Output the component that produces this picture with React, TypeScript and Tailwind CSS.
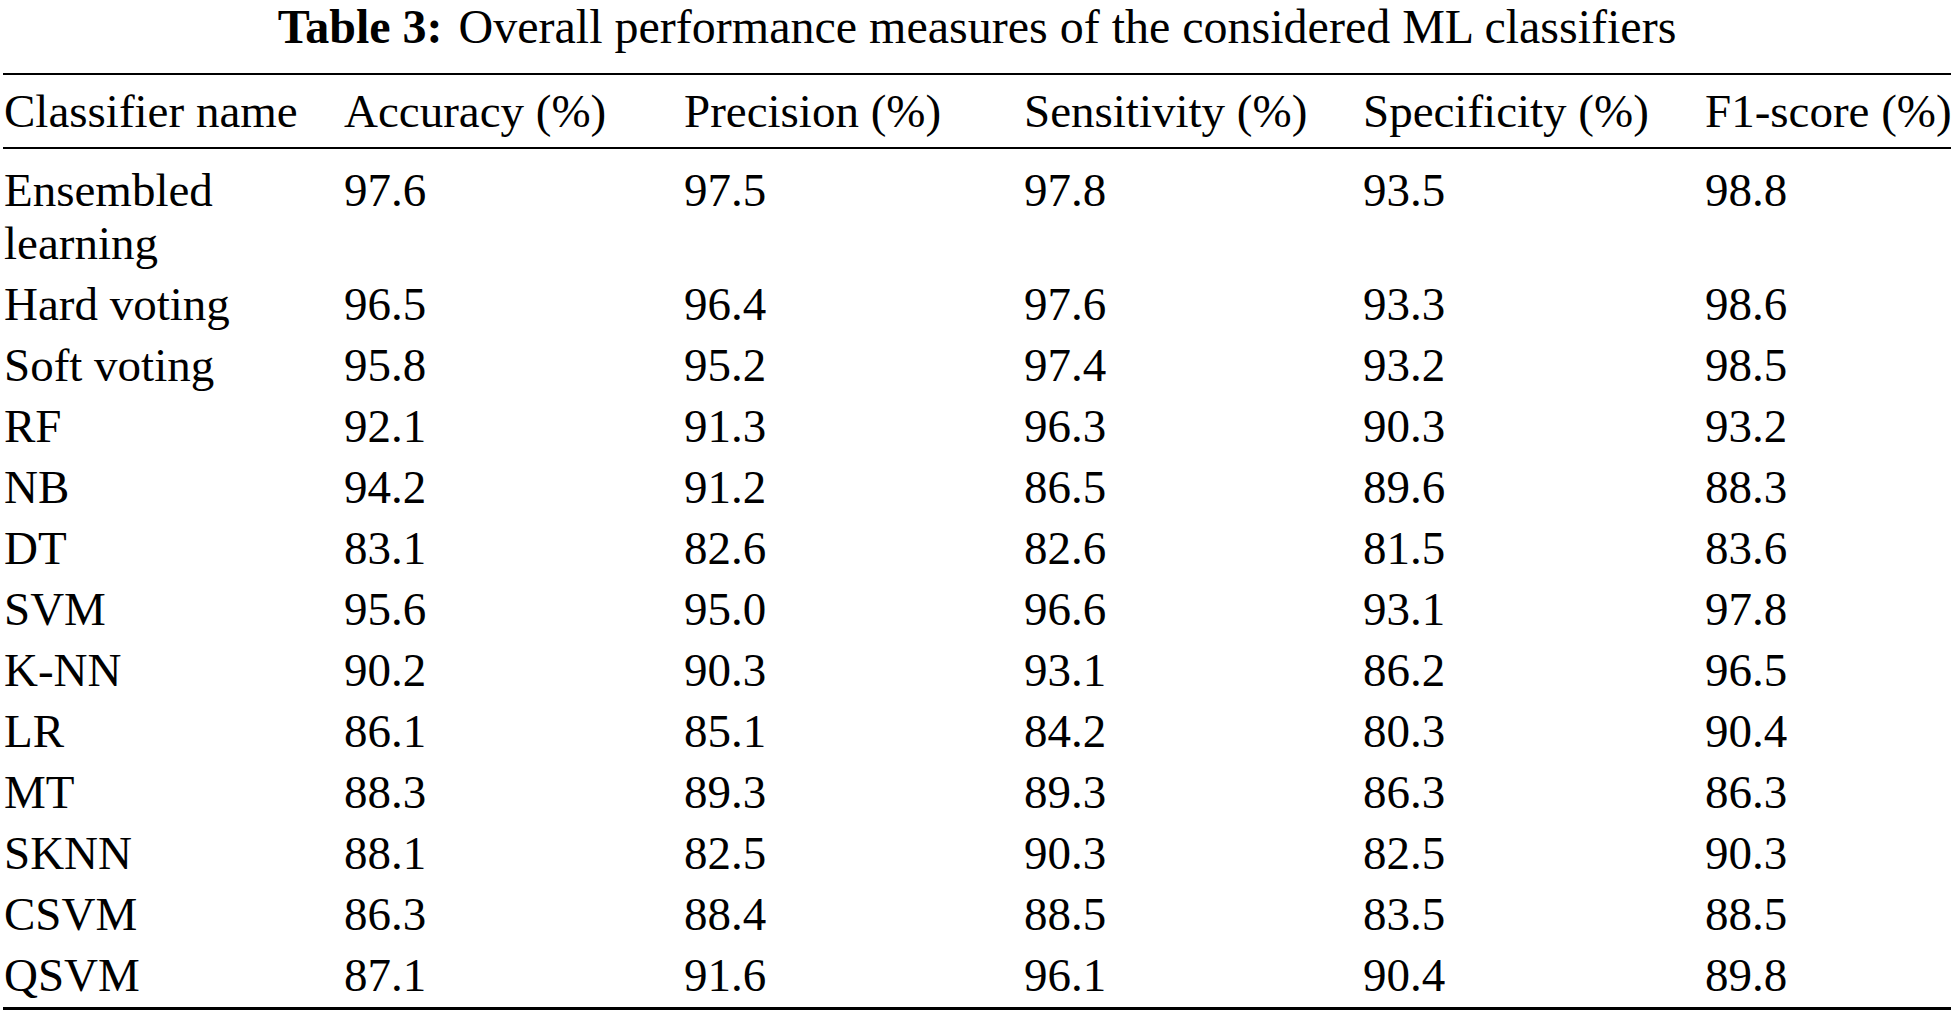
import React from "react";

type Row = {
  name: string;
  values: string[];
};

const headers = [
  "Classifier name",
  "Accuracy (%)",
  "Precision (%)",
  "Sensitivity (%)",
  "Specificity (%)",
  "F1-score (%)",
];

const rows: Row[] = [
  { name: "Ensembled learning", values: ["97.6", "97.5", "97.8", "93.5", "98.8"] },
  { name: "Hard voting", values: ["96.5", "96.4", "97.6", "93.3", "98.6"] },
  { name: "Soft voting", values: ["95.8", "95.2", "97.4", "93.2", "98.5"] },
  { name: "RF", values: ["92.1", "91.3", "96.3", "90.3", "93.2"] },
  { name: "NB", values: ["94.2", "91.2", "86.5", "89.6", "88.3"] },
  { name: "DT", values: ["83.1", "82.6", "82.6", "81.5", "83.6"] },
  { name: "SVM", values: ["95.6", "95.0", "96.6", "93.1", "97.8"] },
  { name: "K-NN", values: ["90.2", "90.3", "93.1", "86.2", "96.5"] },
  { name: "LR", values: ["86.1", "85.1", "84.2", "80.3", "90.4"] },
  { name: "MT", values: ["88.3", "89.3", "89.3", "86.3", "86.3"] },
  { name: "SKNN", values: ["88.1", "82.5", "90.3", "82.5", "90.3"] },
  { name: "CSVM", values: ["86.3", "88.4", "88.5", "83.5", "88.5"] },
  { name: "QSVM", values: ["87.1", "91.6", "96.1", "90.4", "89.8"] },
];

// fixed column tracks so every row lines up like the typeset table
const cols = "grid grid-cols-[340px_340px_340px_339px_342px_1fr]";

export default function App() {
  return (
    <div className="min-h-screen w-[1954px] bg-white text-black font-['Liberation_Serif','Times_New_Roman',serif] text-[47px]">
      {/* Caption */}
      <div className="text-center text-[48px] leading-[54px] whitespace-nowrap">
        <span className="font-bold">Table 3:</span>
        <span className="ml-[16px]">Overall performance measures of the considered ML classifiers</span>
      </div>

      {/* Table */}
      <div className="mt-[19px] mx-[3px]">
        <div className="border-t-2 border-b-2 border-black">
          <div className={`${cols} pl-[1px] pt-[10px] pb-[9px] leading-[53px]`}>
            {headers.map((h) => (
              <div key={h} className="whitespace-nowrap">
                {h}
              </div>
            ))}
          </div>
        </div>

        <div className="pt-[11px] pb-px border-b-[3px] border-black">
          {rows.map((r) => (
            <div key={r.name} className={`${cols} pl-[1px] py-1 leading-[53px]`}>
              <div className="pr-2">{r.name}</div>
              {r.values.map((v, i) => (
                <div key={i}>{v}</div>
              ))}
            </div>
          ))}
        </div>
      </div>
    </div>
  );
}
